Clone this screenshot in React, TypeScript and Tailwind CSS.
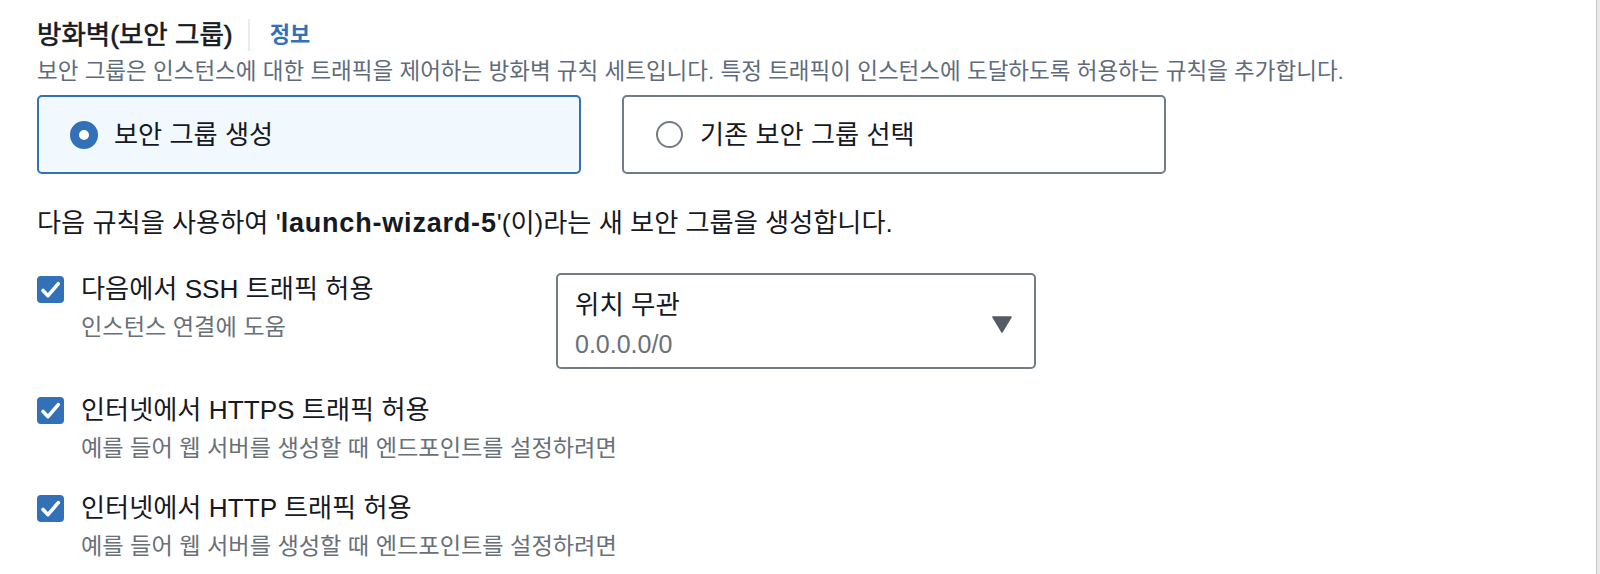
import React from 'react'

function Radio({ checked }: { checked: boolean }) {
  return checked ? (
    <span className="block h-[28px] w-[28px] shrink-0 rounded-full border-[9px] border-[#3270b8] bg-white" />
  ) : (
    <span className="block h-[27px] w-[27px] shrink-0 rounded-full border-2 border-[#737b85] bg-white" />
  )
}

function Checkbox() {
  return (
    <span className="flex h-[27px] w-[27px] shrink-0 items-center justify-center rounded-[4px] bg-[#3270b8]">
      <svg viewBox="0 0 27 27" className="h-[27px] w-[27px]">
        <path
          d="M6 14.5l5 5.2L21.3 7.6"
          fill="none"
          stroke="#fff"
          strokeWidth="3.6"
          strokeLinecap="round"
          strokeLinejoin="round"
        />
      </svg>
    </span>
  )
}

function RuleRow({ label, hint }: { label: string; hint: string }) {
  return (
    <div className="flex">
      <div className="flex h-[32px] items-center">
        <Checkbox />
      </div>
      <div className="ml-[17px]">
        <div className="text-[26.2px] leading-[32px]">{label}</div>
        <div className="mt-[8px] text-[23.2px] leading-[28px] text-[#687078]">{hint}</div>
      </div>
    </div>
  )
}

export default function App() {
  return (
    <div className="flex h-[574px] w-full overflow-hidden bg-white font-['Liberation_Sans','Noto_Sans_CJK_KR',sans-serif] text-[#16191f]">
      <main className="flex-1 pl-[37px] pt-[18.5px]">
        {/* Header */}
        <div className="flex items-center">
          <h2 className="text-[26.5px] font-normal leading-[32px] [-webkit-text-stroke:0.6px_#16191f]">방화벽(보안 그룹)</h2>
          <span className="ml-[15px] h-[32px] w-[2px] bg-[#e9ebed]" />
          <a className="ml-[20px] text-[22px] font-bold leading-[32px] text-[#3270b8]">정보</a>
        </div>
        <p className="mt-[7.5px] text-[22.5px] leading-[28px] text-[#5f6b7a]">
          보안 그룹은 인스턴스에 대한 트래픽을 제어하는 방화벽 규칙 세트입니다. 특정 트래픽이 인스턴스에 도달하도록 허용하는 규칙을 추가합니다.
        </p>

        {/* Create / select */}
        <div className="mt-[9px] flex gap-[41px]">
          <div className="flex h-[79px] w-[544px] items-center rounded-[5px] border-2 border-[#3270b8] bg-[#f1f8fe] pl-[31px]">
            <Radio checked />
            <span className="ml-[16px] text-[26.2px] leading-[32px]">보안 그룹 생성</span>
          </div>
          <div className="flex h-[79px] w-[544px] items-center rounded-[5px] border-2 border-[#737b85] bg-white pl-[32px]">
            <Radio checked={false} />
            <span className="ml-[17px] text-[26.2px] leading-[32px]">기존 보안 그룹 선택</span>
          </div>
        </div>

        <p className="mt-[33px] text-[26.2px] leading-[32px]">
          다음 규칙을 사용하여 '<b className="text-[27px] font-bold tracking-[0.8px]">launch-wizard-5</b>'(이)라는 새 보안 그룹을 생성합니다.
        </p>

        {/* Rules */}
        <div className="mt-[34px] flex items-start">
          <div className="w-[519px]">
            <RuleRow label="다음에서 SSH 트래픽 허용" hint="인스턴스 연결에 도움" />
          </div>
          <div className="flex h-[96px] w-[480px] items-start justify-between rounded-[5px] border-2 border-[#737b85] bg-white pl-[17px] pr-[22px] pt-[14px]">
            <div>
              <div className="text-[26.5px] leading-[32px]">위치 무관</div>
              <div className="mt-[7px] text-[25px] leading-[32px] text-[#687078]">0.0.0.0/0</div>
            </div>
            <svg viewBox="0 0 20 17" className="mt-[27px] h-[17px] w-[20px]">
              <path d="M1 1h18l-9 15z" fill="#545b64" stroke="#545b64" strokeWidth="1.5" strokeLinejoin="round" />
            </svg>
          </div>
        </div>

        <div className="mt-[25px]">
          <RuleRow label="인터넷에서 HTTPS 트래픽 허용" hint="예를 들어 웹 서버를 생성할 때 엔드포인트를 설정하려면" />
        </div>
        <div className="mt-[30px]">
          <RuleRow label="인터넷에서 HTTP 트래픽 허용" hint="예를 들어 웹 서버를 생성할 때 엔드포인트를 설정하려면" />
        </div>
      </main>
      <div className="w-[4px] shrink-0 border-l border-[#c2c4c8] bg-[#e8e9eb]" />
    </div>
  )
}
